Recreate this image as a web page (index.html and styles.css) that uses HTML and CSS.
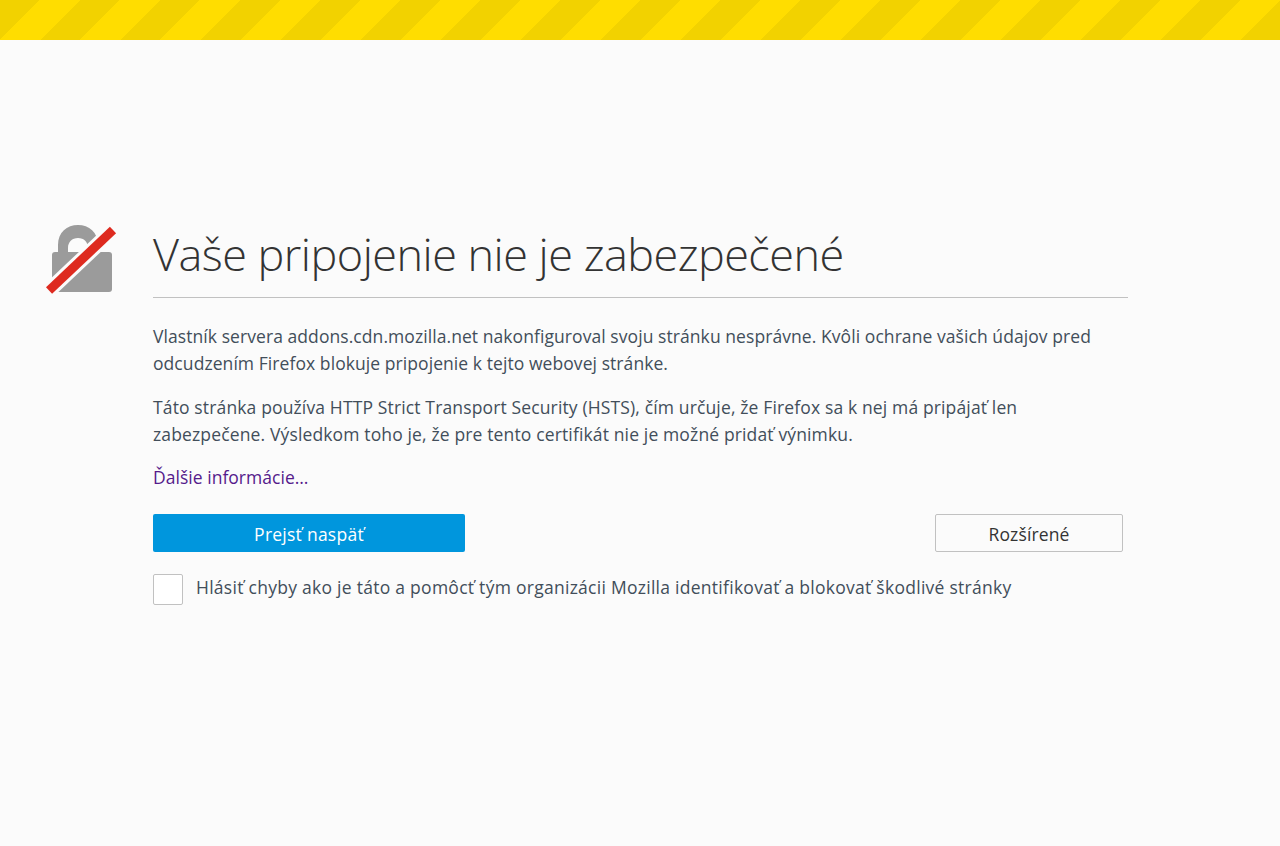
FILE: index.html
```html
<!DOCTYPE html>
<html lang="sk">
<head>
<meta charset="utf-8">
<title>Vaše pripojenie nie je zabezpečené</title>
<link rel="stylesheet" href="styles.css">
</head>
<body>
<div class="stripes"></div>
<main class="page">
  <svg class="lock" width="72" height="72" viewBox="0 0 72 72" aria-hidden="true">
    <path class="lock-body" d="M6 31a3 3 0 0 1 3-3h54a3 3 0 0 1 3 3v34a3 3 0 0 1-3 3H9a3 3 0 0 1-3-3Z"/>
    <path class="lock-body" d="M12 28V21C12 8 21 1 32 1C43 1 52 8 52 21V28H42V24C42 18 38 14 32 14C26 14 22 18 22 24V28Z"/>
    <path class="lock-halo" d="M-2 71.300 72 1.300"/>
    <path class="lock-slash" d="M3 66.500 67 6"/>
  </svg>
  <div class="content">
    <h1 class="title">Vaše pripojenie nie je zabezpečené</h1>
    <p class="para">Vlastník servera addons.cdn.mozilla.net nakonfiguroval svoju stránku nesprávne. Kvôli ochrane vašich údajov pred odcudzením Firefox blokuje pripojenie k tejto webovej stránke.</p>
    <p class="para para-hsts">Táto stránka používa HTTP Strict Transport Security (HSTS), čím určuje, že Firefox sa k nej má pripájať len zabezpečene. Výsledkom toho je, že pre tento certifikát nie je možné pridať výnimku.</p>
    <a class="more" href="#">Ďalšie informácie…</a>
    <div class="actions">
      <button class="btn primary" type="button">Prejsť naspäť</button>
      <button class="btn secondary" type="button">Rozšírené</button>
    </div>
    <label class="report">
      <span class="box"></span>
      <span class="report-text">Hlásiť chyby ako je táto a pomôcť tým organizácii Mozilla identifikovať a blokovať škodlivé stránky</span>
    </label>
  </div>
</main>
</body>
</html>
```
FILE: styles.css
```css
* { box-sizing: border-box; }
html, body { margin: 0; height: 100%; }
body {
  background: #fbfbfb;
  color: #424e5a;
  font-family: "Open Sans", sans-serif;
  font-size: 17.5px;
  letter-spacing: 0.25px;
  overflow: hidden;
}
.stripes {
  height: 40px;
  background: repeating-linear-gradient(135deg, #f2d200 0, #f2d200 28.28px, #ffdd00 28.28px, #ffdd00 56.57px);
}
.page {
  display: flex;
  padding: 184px 0 0 46px;
}
.lock { flex: none; margin: 0 35px 0 0; overflow: hidden; }
.lock-body { fill: #9b9b9b; }
.lock-halo { stroke: #fbfbfb; stroke-width: 15; fill: none; }
.lock-slash { stroke: #de2a1f; stroke-width: 9; fill: none; }
.content { width: 975px; }
.title {
  margin: 0;
  padding-bottom: 14px;
  border-bottom: 1px solid #c1c1c1;
  color: #333;
  font-size: 45px;
  font-weight: 300;
  line-height: 59px;
  letter-spacing: -0.52px;
}
.para { margin: 25px 0 0; line-height: 27px; letter-spacing: 0.07px; }
.para + .para { margin-top: 17px; }
.para-hsts { letter-spacing: 0.14px; }
.more { display: block; margin-top: 16px; line-height: 27px; color: #551a8b; text-decoration: none; letter-spacing: 0.03px; }
.actions { display: flex; justify-content: space-between; margin-top: 23px; padding-right: 5px; }
.btn {
  height: 38px;
  border-radius: 2px;
  font: inherit;
  letter-spacing: inherit;
  padding: 1px 0 0;
}
.primary { width: 312px; border: 0; background: #0096dd; color: #fff; }
.secondary { width: 188px; border: 1px solid #c1c1c1; background: #fbfbfb; color: #333; letter-spacing: 0.12px; }
.report { display: flex; align-items: flex-start; gap: 13px; margin-top: 22px; }
.report-text { line-height: 27px; letter-spacing: 0.27px; }
.box {
  flex: none;
  width: 30px;
  height: 31px;
  border: 1px solid #c1c1c1;
  border-radius: 2px;
  background: #fff;
}
```
